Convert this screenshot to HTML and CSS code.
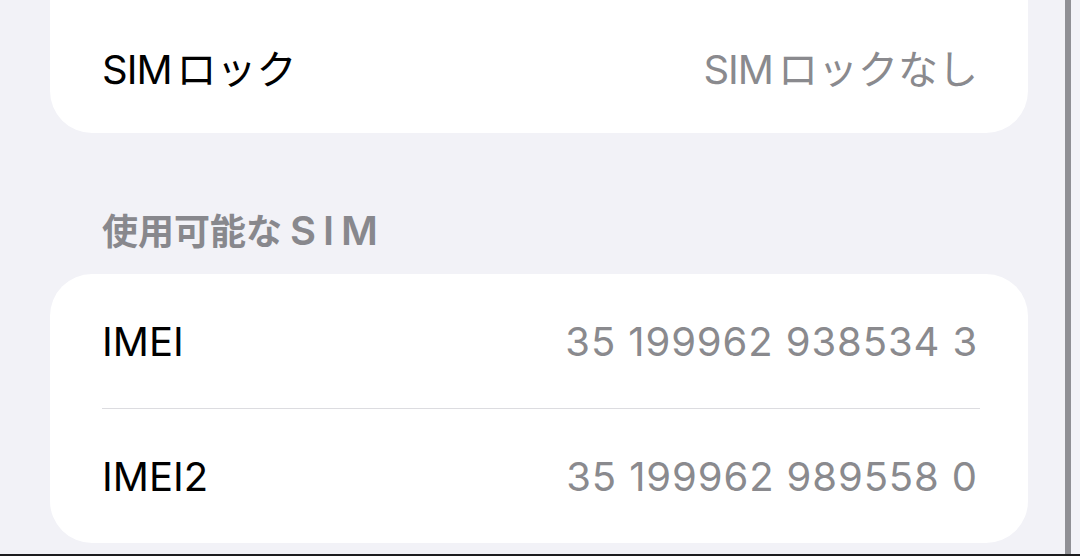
FILE: index.html
```html
<!DOCTYPE html>
<html lang="ja">
<head>
    <meta charset="UTF-8">
    <meta name="viewport" content="width=device-width, initial-scale=1.0">
    <title>情報</title>
    <link rel="stylesheet" href="styles.css">
</head>
<body>
    <div class="frame">
        <div class="settings">
            <div class="group group-top">
                <div class="row">
                    <span class="label"><span class="latin">SIM</span>ロック</span>
                    <span class="value"><span class="latin">SIM</span>ロックなし</span>
                </div>
            </div>

            <div class="section-title">使用可能な<span class="latin-pre">SIM</span></div>

            <div class="group">
                <div class="row">
                    <span class="label">IMEI</span>
                    <span class="value num">35 199962 938534 3</span>
                </div>
                <div class="sep"></div>
                <div class="row">
                    <span class="label">IMEI2</span>
                    <span class="value num">35 199962 989558 0</span>
                </div>
            </div>
        </div>
        <div class="edge"></div>
    </div>
</body>
</html>
```

FILE: styles.css
```css
body {
    margin: 0;
    background-color: #f2f2f7;
    font-family: 'Inter', 'Noto Sans CJK JP', sans-serif;
    -webkit-font-smoothing: antialiased;
}

.frame {
    display: flex;
    height: 554px;
    padding-right: 9px;
    border-bottom: 2px solid #1c1c1e;
    overflow: hidden;
}

.settings {
    flex: 1;
    padding: 0 37px 0 50px;
}

.edge {
    width: 6px;
    background-color: #909095;
}

.group {
    background-color: #fff;
    border-radius: 42px;
    overflow: hidden;
}

/* list is scrolled, top of this group is off screen */
.group-top {
    border-top-left-radius: 0;
    border-top-right-radius: 0;
}

.row {
    display: flex;
    justify-content: space-between;
    align-items: center;
    height: 134px;
    padding: 0 50px 0 52px;
    font-size: 40px;
}

.group-top .row {
    height: 133px;
}

.label {
    color: #000;
}

.value {
    color: #8a8a8e;
}

.num {
    letter-spacing: 0.9px;
}

/* small gap between latin and kana, like iOS does */
.latin {
    letter-spacing: -1px;
    margin-right: 5px;
}

.latin-pre {
    margin-left: 8px;
    font-size: 40px;
    letter-spacing: 7px;
}

.sep {
    height: 1px;
    margin: 0 48px 0 52px;
    background-color: #dcdce0;
}

.section-title {
    padding: 76px 52px 20px;
    font-size: 36px;
    line-height: 44px;
    font-weight: 600;
    color: #88888d;
}
```
